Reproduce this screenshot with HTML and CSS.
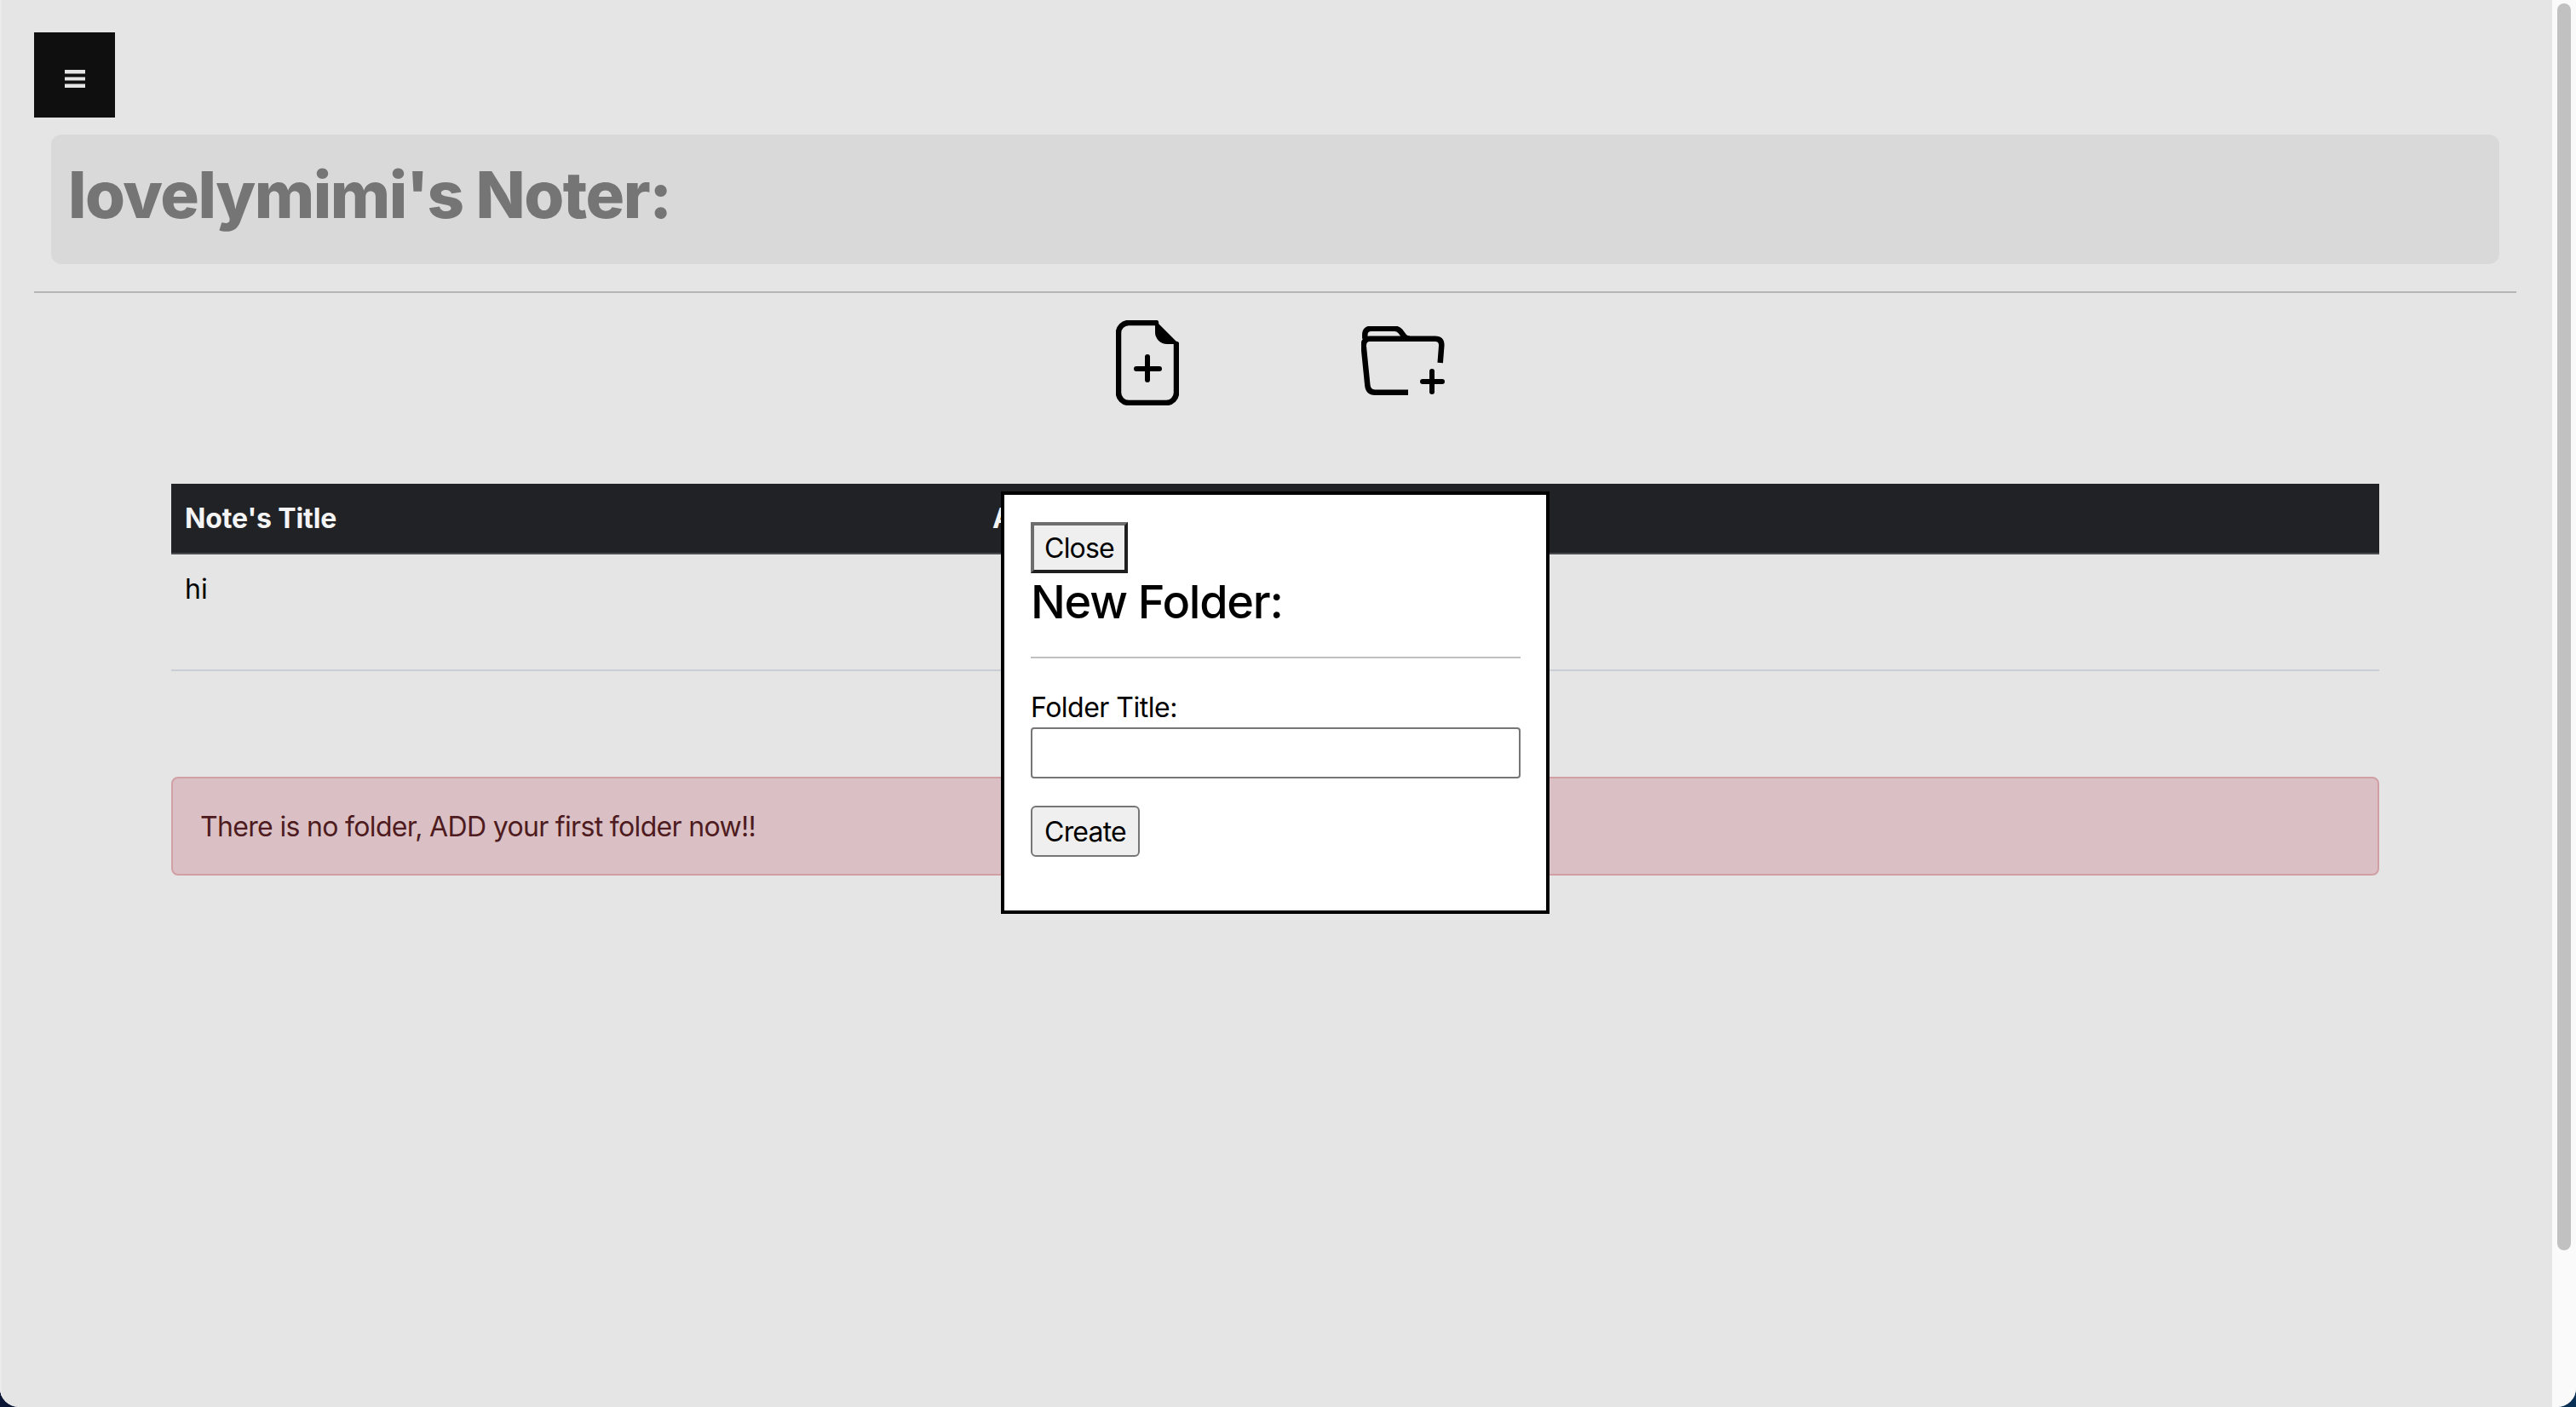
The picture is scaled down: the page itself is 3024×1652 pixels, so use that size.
FILE: index.html
```html
<!DOCTYPE html>
<html lang="en">
<head>
    <meta charset="UTF-8">
    <meta name="viewport" content="width=device-width, initial-scale=1.0">
    <title>lovelymimi's Noter</title>
    <link rel="stylesheet" href="styles.css">
</head>
<body>
    <div class="window">
        <main class="page">
            <button class="menu-btn" type="button" aria-label="Menu">
                <svg width="24" height="21" viewBox="0 0 24 21"><path d="M0 0h24v4.500H0zM0 8.500h24v4H0zM0 16.500h24v4.500H0z" fill="#e4e4e4"/></svg>
            </button>

            <div class="title-bar">
                <h1>lovelymimi's Noter:</h1>
            </div>
            <hr class="top-rule">

            <div class="add-icons">
                <svg width="74" height="100" viewBox="0 0 74 100" fill="none" stroke="#000" stroke-width="6.500" stroke-linecap="round">
                    <path d="M47 3H15A12 12 0 0 0 3 15V85A12 12 0 0 0 15 97H59A12 12 0 0 0 71 85V28"/>
                    <path d="M46 0L74 28H60A14 14 0 0 1 46 14Z" fill="#000" stroke="none"/>
                    <path d="M24 57H51M37 43V70" stroke-width="6"/>
                </svg>
                <svg class="folder-icon" width="99" height="81" viewBox="0 0 99 81" fill="none" stroke="#000" stroke-width="6.500">
                    <path d="M55 77.700H16Q8 77.700 7.300 69L2.700 23Q2.700 14.700 10 14.700H86.700Q94.300 14.700 94.300 22.300L92.700 43"/>
                    <path d="M4.300 14.700V10Q4.300 2.700 11.700 2.700H39Q43 2.700 46 6L49 10Q52 14.700 57 14.700"/>
                    <path d="M72 65H95M83 53V77" stroke-width="6" stroke-linecap="round"/>
                </svg>
            </div>

            <section class="content">
                <table class="notes-table">
                    <thead>
                        <tr>
                            <th class="col-title">Note's Title</th>
                            <th>Action</th>
                        </tr>
                    </thead>
                    <tbody>
                        <tr>
                            <td>hi</td>
                            <td></td>
                        </tr>
                    </tbody>
                </table>

                <div class="alert">There is no folder, ADD your first folder now!!</div>
            </section>

            <div class="modal">
                <button class="close-btn" type="button">Close</button>
                <h2>New Folder:</h2>
                <hr class="modal-rule">
                <form>
                    <label for="folderTitle">Folder Title:</label>
                    <input type="text" id="folderTitle" name="folderTitle">
                    <button class="create-btn" type="submit">Create</button>
                </form>
            </div>
        </main>

        <div class="scrollbar"><div class="scrollbar-thumb"></div></div>
    </div>
</body>
</html>
```

FILE: styles.css
```css
* {
    box-sizing: border-box;
}
html, body {
    height: 100%;
}
body {
    margin: 0;
    overflow: hidden;
    background: linear-gradient(90deg, #0a1535, #0b3055);
    font-family: Inter, "Liberation Sans", sans-serif;
    font-size: 32px;
    color: #000;
}
.window {
    display: flex;
    height: 1652px;
    border-radius: 0 0 22px 22px;
    overflow: hidden;
    background: #e5e5e5;
}
.page {
    position: relative;
    width: 2996px;
    flex: none;
    padding: 38px 42px 0 38px;
    border-left: 2px solid #ebebeb;
    background: #e5e5e5;
}
.menu-btn {
    display: flex;
    align-items: center;
    justify-content: center;
    width: 95px;
    height: 100px;
    padding: 8px 0 0;
    border: 0;
    background: #0f0f0f;
}
.title-bar {
    height: 152px;
    margin: 20px 20px 0;
    padding: 24px 20px 0;
    border-radius: 12px;
    background: #d9d9d9;
}
h1 {
    margin: 0;
    font-size: 76px;
    font-weight: 800;
    line-height: 92px;
    letter-spacing: -1.500px;
    color: #757575;
}
.top-rule {
    height: 2px;
    margin: 32px 0 0;
    border: 0;
    background: #b5b5b5;
}
.add-icons {
    display: flex;
    align-items: center;
    justify-content: center;
    gap: 214px;
    height: 100px;
    margin-top: 32px;
    padding-left: 12px;
}
.folder-icon {
    margin-bottom: 6px;
}
.content {
    margin: 92px 161px 0;
}
.notes-table {
    width: 100%;
    border-collapse: collapse;
    table-layout: fixed;
}
.notes-table th {
    height: 82px;
    padding: 0 16px;
    border-bottom: 2px solid #4a4b4f;
    background: #202226;
    color: #f4f4f4;
    font-weight: 700;
    text-align: left;
    letter-spacing: -0.100px;
}
.col-title {
    width: 948px;
}
.notes-table td {
    height: 137px;
    padding: 26px 16px 0;
    border-bottom: 2px solid #c8ced3;
    line-height: 30px;
    vertical-align: top;
}
.alert {
    height: 116px;
    margin-top: 124px;
    padding: 40px 32px 0;
    border: 2px solid #d0a0a5;
    border-radius: 8px;
    background: #dac0c4;
    color: #4e1b20;
    line-height: 34px;
    letter-spacing: -0.670px;
}
.modal {
    position: absolute;
    top: 577px;
    left: 1173px;
    width: 644px;
    height: 496px;
    padding: 32px 30px 32px 31px;
    border: 4px solid #000;
    background: #fff;
}
.close-btn,
.create-btn {
    display: block;
    height: 60px;
    padding: 0;
    background: #efefef;
    color: #000;
    font-family: inherit;
    font-size: 32px;
    letter-spacing: -0.800px;
}
.close-btn {
    width: 114px;
    border: 4px solid;
    border-color: #6e6e6e #1f1f1f #1f1f1f #6e6e6e;
}
.create-btn {
    width: 128px;
    margin-top: 32px;
    border: 2px solid #767676;
    border-radius: 6px;
}
h2 {
    margin: 0;
    font-size: 54px;
    font-weight: 500;
    line-height: 67px;
    letter-spacing: -1.250px;
}
.modal-rule {
    height: 2px;
    margin: 31px 0 0;
    border: 0;
    background: #c0c0c0;
}
label {
    display: block;
    margin-top: 35px;
    line-height: 46px;
    letter-spacing: -0.500px;
}
input {
    display: block;
    width: 100%;
    height: 60px;
    border: 2px solid #767676;
    border-radius: 4px;
    background: #fff;
}
.scrollbar {
    flex: 1;
    padding: 4px 6px 0;
    background: #fafafa;
}
.scrollbar-thumb {
    width: 16px;
    height: 1464px;
    border-radius: 8px;
    background: #c1c1c1;
}
```
